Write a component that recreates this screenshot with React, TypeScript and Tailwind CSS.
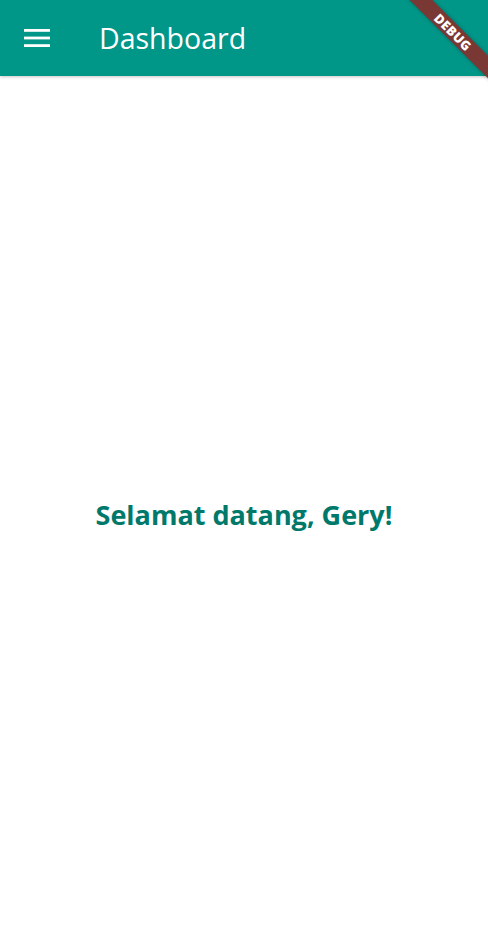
import React from "react";

export default function App() {
  return (
    <div
      className="relative w-[488px] h-[951px] overflow-hidden bg-white flex flex-col"
      style={{ fontFamily: '"Open Sans", "Noto Sans", sans-serif' }}
    >
      <header className="h-[76px] bg-[#009688] flex items-center shrink-0 shadow-[0_1px_3px_rgba(0,0,0,0.22)] z-10">
        <div className="w-[74px] flex justify-center">
          <svg width="26" height="18" viewBox="0 0 26 18" fill="white">
            <rect x="0" y="0" width="26" height="2.8" />
            <rect x="0" y="7.6" width="26" height="2.8" />
            <rect x="0" y="15.2" width="26" height="2.8" />
          </svg>
        </div>
        <h1 className="ml-[25px] text-white text-[28.5px] font-normal leading-none">Dashboard</h1>
      </header>
      <main className="flex-1 flex items-center justify-center">
        <p className="text-[#00796b] text-[27px] font-bold mt-[4px]">Selamat datang, Gery!</p>
      </main>
      <div className="absolute left-[373px] top-[23.5px] w-[160px] h-[16px] rotate-45 bg-[#7a3834] shadow-[0_0_4px_rgba(0,0,0,0.3)] flex items-center justify-center z-20">
        <span className="text-white text-[13px] font-black tracking-[0.3px] leading-none">DEBUG</span>
      </div>
    </div>
  );
}
